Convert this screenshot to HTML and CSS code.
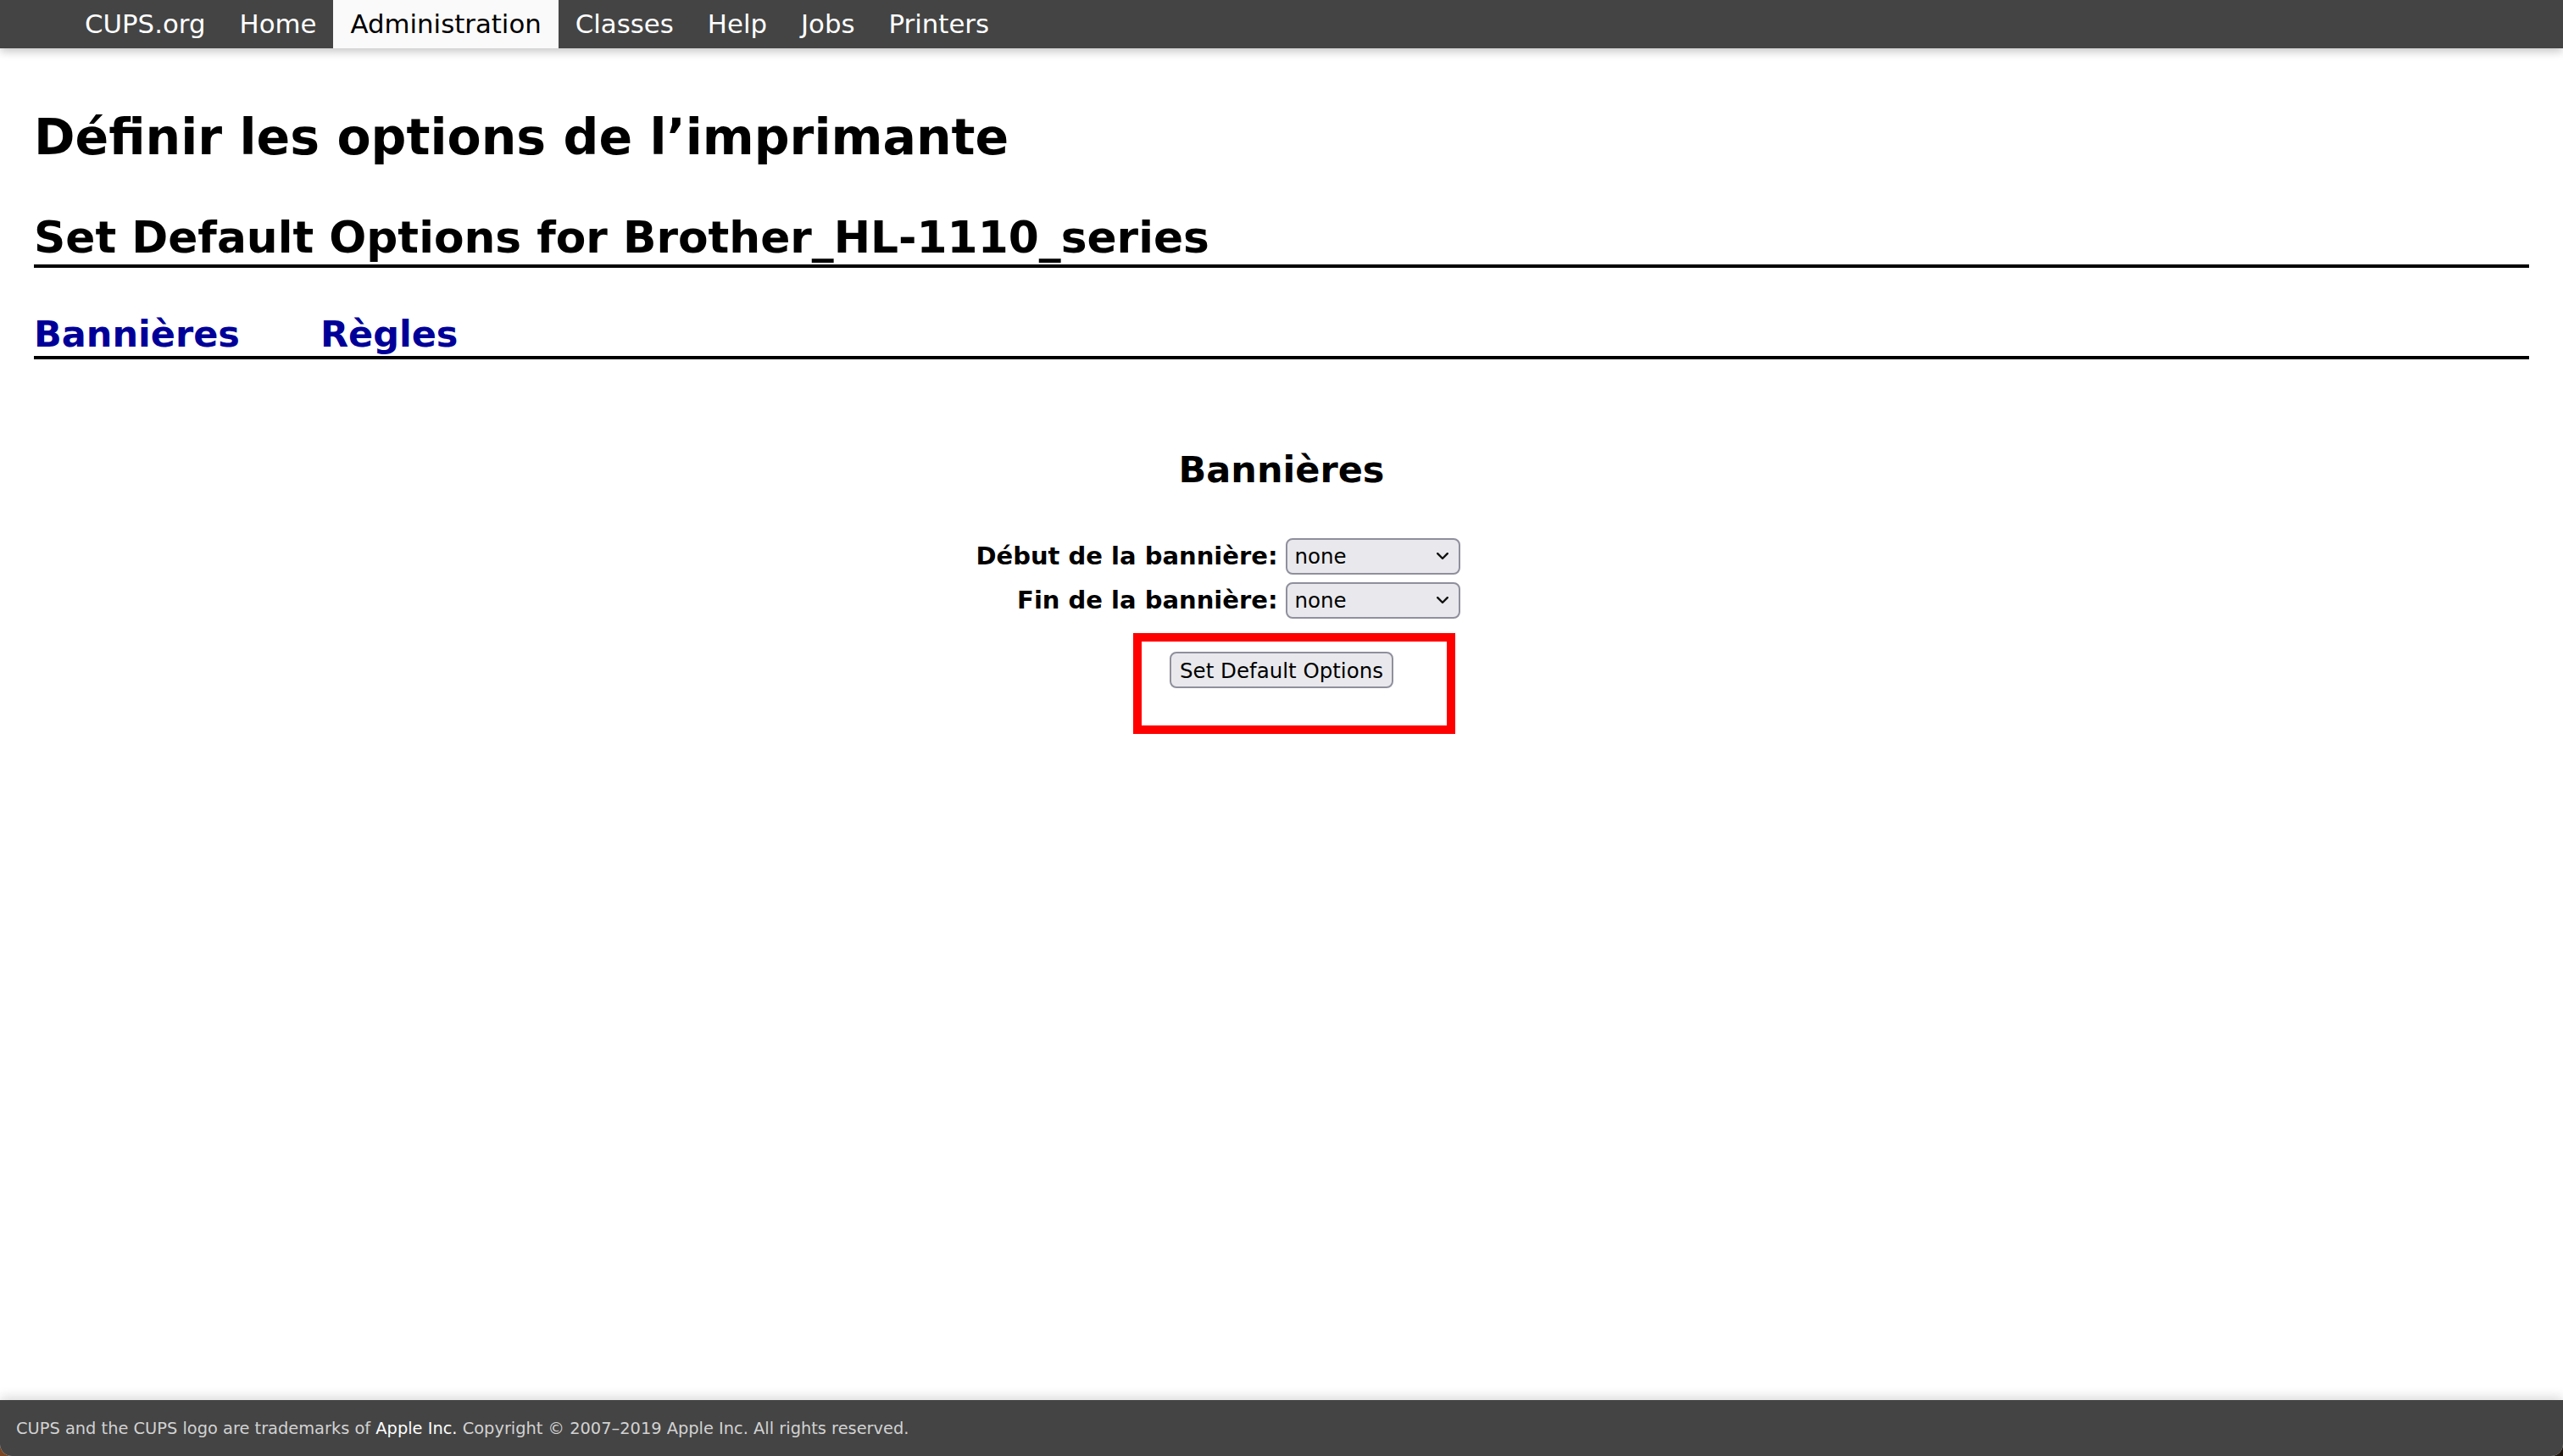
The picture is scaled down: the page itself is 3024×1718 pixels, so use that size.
FILE: index.html
```html
<!DOCTYPE html>
<html lang="fr">
<head>
<meta charset="utf-8">
<title>Définir les options de l’imprimante - CUPS</title>
<link rel="stylesheet" href="styles.css">
</head>
<body>
<div class="window">
  <header class="header">
    <ul class="nav">
      <li><a class="nav-link" href="#">CUPS.org</a></li>
      <li><a class="nav-link" href="#">Home</a></li>
      <li><a class="nav-link active" href="#">Administration</a></li>
      <li><a class="nav-link" href="#">Classes</a></li>
      <li><a class="nav-link" href="#">Help</a></li>
      <li><a class="nav-link" href="#">Jobs</a></li>
      <li><a class="nav-link" href="#">Printers</a></li>
    </ul>
  </header>
  <main class="content">
    <h1 class="page-title">Définir les options de l’imprimante</h1>
    <h2 class="page-subtitle">Set Default Options for Brother_HL-1110_series</h2>
    <div class="tabs">
      <a class="tab" href="#">Bannières</a>
      <a class="tab" href="#">Règles</a>
    </div>
    <h3 class="group-title">Bannières</h3>
    <form class="options">
      <label class="opt-label" for="job-sheets-start">Début de la bannière:</label>
      <span class="select-wrap">
        <select class="select" id="job-sheets-start"><option>none</option></select>
        <svg class="chevron" width="14" height="9" viewBox="0 0 14 9"><path d="M1.2 1.2 L7 7 L12.8 1.2" fill="none" stroke="#111" stroke-width="2.4" stroke-linecap="round" stroke-linejoin="round"/></svg>
      </span>
      <label class="opt-label" for="job-sheets-end">Fin de la bannière:</label>
      <span class="select-wrap">
        <select class="select" id="job-sheets-end"><option>none</option></select>
        <svg class="chevron" width="14" height="9" viewBox="0 0 14 9"><path d="M1.2 1.2 L7 7 L12.8 1.2" fill="none" stroke="#111" stroke-width="2.4" stroke-linecap="round" stroke-linejoin="round"/></svg>
      </span>
      <div class="submit-row">
        <span class="submit-wrap">
          <button class="button" type="button">Set Default Options</button>
          <span class="highlight"></span>
        </span>
      </div>
    </form>
  </main>
  <footer class="footer">
    <p class="footer-text">CUPS and the CUPS logo are trademarks of <a class="footer-link" href="#">Apple Inc.</a> Copyright © 2007–2019 Apple Inc. All rights reserved.</p>
  </footer>
</div>
</body>
</html>
```

FILE: styles.css
```css
html, body {
  margin: 0;
  padding: 0;
  height: 100%;
}

body {
  background: linear-gradient(to right, #7a4522 0%, #3a2416 60%, #1e140e 100%);
  font-family: "DejaVu Sans", Verdana, sans-serif;
  color: #000;
}

.window {
  height: 100vh;
  display: flex;
  flex-direction: column;
  background: #fff;
  overflow: hidden;
  border-radius: 0 0 14px 14px;
}

.header {
  position: relative;
  z-index: 2;
  height: 57px;
  flex: 0 0 57px;
  background: #444444;
  box-shadow: 0 4px 10px rgba(0, 0, 0, 0.22);
}

.nav {
  list-style: none;
  margin: 0 0 0 80px;
  padding: 0;
  display: flex;
}

.nav-link {
  display: block;
  padding: 0 20px;
  line-height: 57px;
  font-size: 30.8px;
  color: #fff;
  text-decoration: none;
}

.nav-link.active {
  background: #fafafa;
  color: #000;
}

.content {
  flex: 1;
  padding: 0 40px;
}

.page-title {
  margin: 70px 0 0;
  font-size: 58.5px;
  line-height: 70px;
  font-weight: bold;
}

.page-subtitle {
  margin: 53px 0 0;
  font-size: 51.8px;
  line-height: 60px;
  font-weight: bold;
  padding-bottom: 2px;
  border-bottom: 4px solid #000;
}

.tabs {
  margin-top: 53px;
  display: flex;
  gap: 95px;
  padding-bottom: 1px;
  border-bottom: 4px solid #000;
}

.tab {
  font-size: 43px;
  line-height: 50px;
  font-weight: bold;
  color: #000099;
  text-decoration: none;
}

.group-title {
  margin: 105px 0 0;
  text-align: center;
  font-size: 43px;
  line-height: 50px;
  font-weight: bold;
}

.options {
  margin-top: 56px;
  display: grid;
  grid-template-columns: 1fr 1fr;
  column-gap: 9px;
  row-gap: 9px;
}

.opt-label {
  text-align: right;
  font-size: 29px;
  line-height: 42px;
  font-weight: bold;
}

.select-wrap {
  position: relative;
  justify-self: start;
  height: 43px;
}

.select {
  -webkit-appearance: none;
  appearance: none;
  display: block;
  box-sizing: border-box;
  width: 206px;
  height: 43px;
  margin: 0;
  padding: 0 0 0 9px;
  border: 2px solid #8f8f9d;
  border-radius: 8px;
  background: #e9e9ed;
  color: #000;
  font-family: "DejaVu Sans", Verdana, sans-serif;
  font-size: 24.5px;
}

.chevron {
  position: absolute;
  right: 14px;
  top: 17px;
  pointer-events: none;
}

.submit-row {
  grid-column: 1 / -1;
  justify-self: center;
  margin-top: 30px;
}

.submit-wrap {
  position: relative;
  display: block;
}

.button {
  display: block;
  box-sizing: border-box;
  height: 43px;
  margin: 0;
  padding: 0 10px;
  border: 2px solid #8f8f9d;
  border-radius: 8px;
  background: #e9e9ed;
  color: #000;
  font-family: "DejaVu Sans", Verdana, sans-serif;
  font-size: 24.5px;
  line-height: 41px;
}

.highlight {
  position: absolute;
  left: -43px;
  top: -22px;
  width: 380px;
  height: 119px;
  box-sizing: border-box;
  border: 10px solid #ff0000;
  pointer-events: none;
}

.footer {
  position: relative;
  z-index: 2;
  flex: 0 0 66px;
  height: 66px;
  display: flex;
  align-items: center;
  padding: 0 19px;
  background: #444444;
  box-shadow: 0 -4px 12px rgba(0, 0, 0, 0.14);
}

.footer-text {
  margin: 0;
  font-size: 19.4px;
  color: #d2d2d2;
  white-space: nowrap;
}

.footer-link {
  color: #fff;
  text-decoration: none;
}
```
